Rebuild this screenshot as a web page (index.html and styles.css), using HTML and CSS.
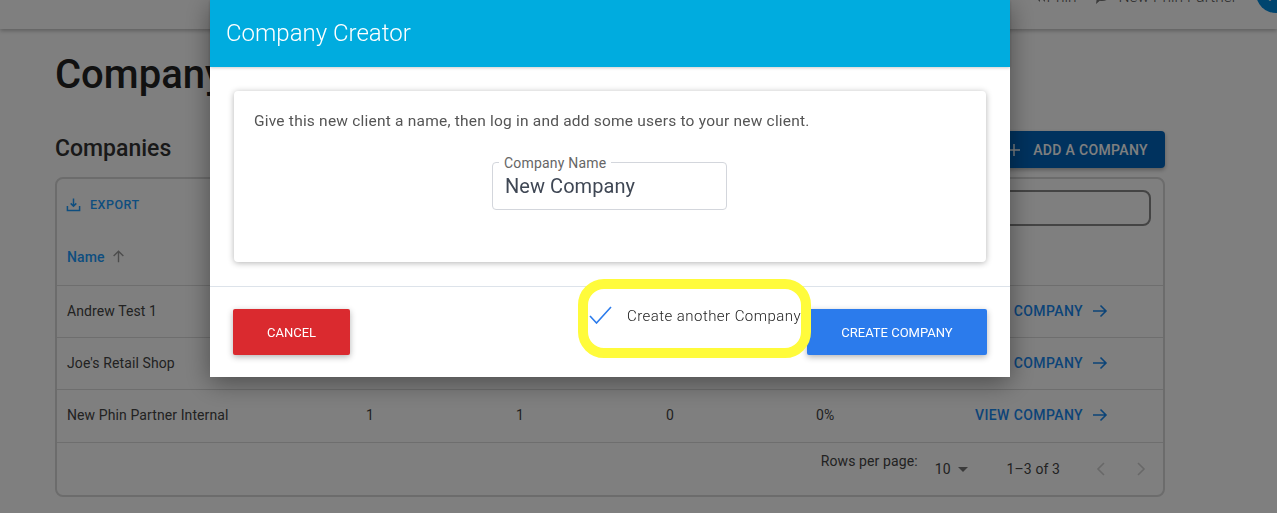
FILE: index.html
```html
<!DOCTYPE html>
<html>
<head>
    <title>Companies</title>
    <link rel="stylesheet" href="styles.css">
</head>
<body>

<!-- Top bar, page is scrolled so it is cut off -->
<div class="topbar">
    <div class="top-item phin-item">
        <svg class="phin-icon" viewBox="0 0 11 16"><path d="M6 3 1 8l5 5zM11 3 6 8l5 5z"/></svg>
        <span>Phin</span>
    </div>
    <div class="top-item">
        <svg class="top-icon" viewBox="0 0 16 16"><path d="M8 1c4.400 0 8 2.400 8 5.500S12.400 12 8 12c-.8 0-1.500-.1-2.200-.2L2 15l.6-4.200C1 9.800 0 8.200 0 6.500 0 3.400 3.600 1 8 1z"/></svg>
        <span>New Phin Partner</span>
    </div>
    <div class="avatar">A</div>
</div>

<div class="page">
    <h1>Company Management</h1>

    <div class="section-head">
        <h2>Companies</h2>
        <button class="add-btn">
            <svg class="add-icon" viewBox="0 0 16 16"><path d="M8 2v12M2 8h12" stroke="currentColor" stroke-width="1.4" fill="none"/></svg>
            ADD A COMPANY
        </button>
    </div>

    <div class="table-card">
        <div class="toolbar">
            <a class="export">
                <svg class="export-icon" viewBox="0 0 16 16"><path d="M8 1.5v8M5 6.8 8 9.8l3-3M1.5 9.5v5h13v-5" stroke="currentColor" stroke-width="1.6" fill="none"/></svg>
                EXPORT
            </a>
            <div class="search"></div>
        </div>
        <div class="row head-row">
            <div class="name-head">Name
                <svg class="sort-icon" viewBox="0 0 16 16"><path d="M8 14V2.5M2.8 7.5 8 2.5l5.2 5" stroke="currentColor" stroke-width="1.5" fill="none"/></svg>
            </div>
        </div>
        <div class="row">
            <div>Andrew Test 1</div><div>1</div><div>1</div><div>0</div><div>0%</div>
            <a class="view">VIEW COMPANY <svg class="arrow" viewBox="0 0 16 16"><path d="M1 8h13M8.5 2.5 14 8l-5.500 5.500" stroke="currentColor" stroke-width="1.6" fill="none"/></svg></a>
        </div>
        <div class="row">
            <div>Joe's Retail Shop</div><div>1</div><div>1</div><div>0</div><div>0%</div>
            <a class="view">VIEW COMPANY <svg class="arrow" viewBox="0 0 16 16"><path d="M1 8h13M8.5 2.5 14 8l-5.500 5.500" stroke="currentColor" stroke-width="1.6" fill="none"/></svg></a>
        </div>
        <div class="row">
            <div>New Phin Partner Internal</div><div>1</div><div>1</div><div>0</div><div>0%</div>
            <a class="view">VIEW COMPANY <svg class="arrow" viewBox="0 0 16 16"><path d="M1 8h13M8.5 2.5 14 8l-5.500 5.500" stroke="currentColor" stroke-width="1.6" fill="none"/></svg></a>
        </div>
        <div class="pager">
            <span class="rows-label">Rows per page:</span>
            <span class="rows-value">10</span>
            <span class="caret"></span>
            <span class="range">1–3 of 3</span>
            <svg class="page-icon" viewBox="0 0 12 16"><path d="M9 2 3 8l6 6" stroke="currentColor" stroke-width="1.6" fill="none"/></svg>
            <svg class="page-icon" viewBox="0 0 12 16"><path d="M3 2l6 6-6 6" stroke="currentColor" stroke-width="1.6" fill="none"/></svg>
        </div>
    </div>
</div>

<div class="overlay"></div>

<!-- Company creator dialog -->
<div class="modal">
    <div class="modal-head">Company Creator</div>
    <div class="modal-body">
        <div class="inner-card">
            <p>Give this new client a name, then log in and add some users to your new client.</p>
            <div class="field">
                <span class="field-label">Company Name</span>
                New Company
            </div>
        </div>
    </div>
    <div class="modal-foot">
        <button class="btn-cancel">CANCEL</button>
        <div class="another">
            <svg class="check" viewBox="0 0 23 18"><path d="M1 10 7.500 17 22 1" stroke="#2b7bec" stroke-width="1.600" fill="none"/></svg>
            <span>Create another Company</span>
        </div>
        <button class="btn-create">CREATE COMPANY</button>
    </div>
</div>

<div class="highlight"></div>

</body>
</html>
```

FILE: styles.css
```css
html, body {
    height: 100%;
}
body {
    font-family: Roboto, sans-serif;
    margin: 0;
    background-color: #ffffff;
    color: #222;
    overflow: hidden;
}

/* Top bar */
.topbar {
    display: flex;
    justify-content: flex-end;
    align-items: flex-start;
    height: 29px;
    overflow: hidden;
    background-color: #ffffff;
    box-shadow: 0 2px 4px rgba(0,0,0,0.25);
    color: #555;
    font-size: 15.500px;
    font-weight: 300;
}
.top-item {
    display: flex;
    align-items: center;
    gap: 9px;
    margin-top: -12px;
    margin-right: 19px;
}
.phin-item {
    gap: 1px;
    margin-right: 17px;
}
.top-icon {
    width: 16px;
    height: 16px;
    fill: #777;
}
.phin-icon {
    width: 11px;
    height: 16px;
    fill: #777;
}
.avatar {
    width: 40px;
    height: 40px;
    margin-top: -27px;
    margin-right: -19px;
    border-radius: 50%;
    background-color: #008ade;
    color: #fff;
    font-size: 24px;
    line-height: 40px;
    text-align: center;
}

/* Page */
.page {
    padding: 0 112px 0 55px;
}
h1 {
    margin: 21px 0 0 0;
    font-size: 40px;
    line-height: 50px;
    font-weight: 500;
}
.section-head {
    display: flex;
    justify-content: space-between;
    align-items: center;
    margin-top: 31px;
    height: 37px;
}
h2 {
    margin: -2px 0 0 0;
    color: #333;
    font-size: 23px;
    font-weight: 500;
}
.add-btn {
    display: flex;
    align-items: center;
    gap: 11px;
    height: 37px;
    padding: 0 17px 0 16px;
    border: none;
    border-radius: 4px;
    background-color: #0065bd;
    color: #fff;
    font-family: Roboto, sans-serif;
    font-size: 14px;
    font-weight: 500;
    letter-spacing: 0.35px;
    box-shadow: 0 2px 4px rgba(0,0,0,0.3);
}
.add-icon {
    width: 16px;
    height: 16px;
}
.table-card {
    margin-top: 9px;
    height: 316px;
    border: 2px solid #d8d8d8;
    border-radius: 8px;
    color: #444;
    font-size: 14px;
    letter-spacing: 0.1px;
}
.toolbar {
    display: flex;
    justify-content: space-between;
    align-items: flex-start;
    height: 38px;
    padding: 11px 12px 0 9px;
}
.export {
    display: flex;
    align-items: center;
    gap: 9px;
    margin-top: 7px;
    color: #1c9cff;
    font-size: 12.500px;
    font-weight: 500;
    letter-spacing: 0.5px;
}
.export-icon {
    width: 15px;
    height: 15px;
}
.search {
    width: 400px;
    height: 32px;
    border: 2px solid #888;
    border-radius: 8px;
}
.row {
    display: grid;
    grid-template-columns: 299px 150px 150px 150px 159px 1fr;
    align-items: center;
    height: 50px;
    padding: 0 0 1px 10px;
    border-top: 1px solid #dcdcdc;
}
.head-row {
    border-top: none;
    height: 57px;
    padding-bottom: 0;
}
.name-head {
    display: flex;
    align-items: center;
    gap: 6px;
    color: #1c9cff;
    font-weight: 500;
}
.sort-icon {
    width: 15px;
    height: 15px;
    color: #999;
}
.view {
    display: flex;
    align-items: center;
    gap: 9px;
    color: #1888f0;
    font-weight: 500;
    letter-spacing: 0.4px;
}
.arrow {
    width: 16px;
    height: 16px;
}
.pager {
    display: flex;
    align-items: center;
    height: 52px;
    margin-top: 1px;
    padding-right: 16px;
    justify-content: flex-end;
    border-top: 1px solid #dcdcdc;
    font-size: 14px;
}
.rows-label {
    margin-top: -16px;
    margin-right: 17px;
}
.rows-value {
    margin-right: 7px;
}
.caret {
    width: 0;
    height: 0;
    border-left: 5px solid transparent;
    border-right: 5px solid transparent;
    border-top: 5px solid #777;
    margin-right: 39px;
}
.range {
    margin-right: 35px;
}
.page-icon {
    width: 12px;
    height: 16px;
    color: #d0d0d0;
    margin-left: 28px;
}
.page-icon:first-of-type {
    margin-left: 0;
}

/* Dialog */
.overlay {
    position: fixed;
    inset: 0;
    background-color: rgba(0,0,0,0.5);
}
.modal {
    position: fixed;
    left: 210px;
    top: 0;
    width: 800px;
    height: 377px;
    display: flex;
    flex-direction: column;
    background-color: #ffffff;
    box-shadow: 0 6px 24px rgba(0,0,0,0.4);
}
.modal-head {
    height: 67px;
    flex: none;
    padding-left: 16px;
    background-color: #00acdf;
    color: #fff;
    font-size: 24px;
    font-weight: 300;
    line-height: 67px;
    box-shadow: 0 1px 3px rgba(0,0,0,0.2);
}
.modal-body {
    height: 220px;
    flex: none;
    padding: 24px;
    box-sizing: border-box;
    border-bottom: 1px solid #dde3ea;
}
.inner-card {
    height: 171px;
    padding: 20px;
    box-sizing: border-box;
    border-radius: 4px;
    background-color: #fff;
    box-shadow: 0 1px 6px rgba(0,0,0,0.3);
}
.inner-card p {
    margin: 1px 0 0 0;
    color: #555;
    font-size: 15.500px;
    line-height: 18px;
    letter-spacing: 0.21px;
}
.field {
    position: relative;
    width: 235px;
    height: 48px;
    box-sizing: border-box;
    margin: 32px 0 0 238px;
    padding-left: 12px;
    border: 1px solid #d3d6dc;
    border-radius: 4px;
    color: #3f4754;
    font-size: 20px;
    line-height: 47px;
    letter-spacing: 0.05px;
}
.field-label {
    position: absolute;
    left: 6px;
    top: -8px;
    padding: 0 5px;
    background-color: #fff;
    color: #666;
    font-size: 14px;
    line-height: 16px;
    letter-spacing: 0.2px;
}
.modal-foot {
    flex: 1;
    display: flex;
    align-items: flex-start;
    padding: 22px 23px 0 23px;
}
.modal-foot button {
    height: 46px;
    border: none;
    border-radius: 2px;
    color: #fff;
    font-family: Roboto, sans-serif;
    font-size: 13px;
    box-shadow: 0 2px 6px rgba(0,0,0,0.3);
}
.btn-cancel {
    width: 117px;
    background-color: #da2a2f;
}
.btn-create {
    width: 180px;
    background-color: #2b7bec;
}
.another {
    display: flex;
    align-items: center;
    gap: 15px;
    width: 218px;
    margin-left: auto;
    margin-top: -4px;
    color: #222;
    font-size: 15px;
    font-weight: 300;
    letter-spacing: 0.45px;
    white-space: nowrap;
}
.another span {
    margin-top: 2px;
}
.check {
    flex: none;
    width: 23px;
    height: 18px;
}

/* Yellow marker ring drawn over the screenshot */
.highlight {
    position: fixed;
    left: 578px;
    top: 279px;
    width: 233px;
    height: 79px;
    box-sizing: border-box;
    border: 10px solid #fffb3b;
    border-radius: 26px;
}
```
